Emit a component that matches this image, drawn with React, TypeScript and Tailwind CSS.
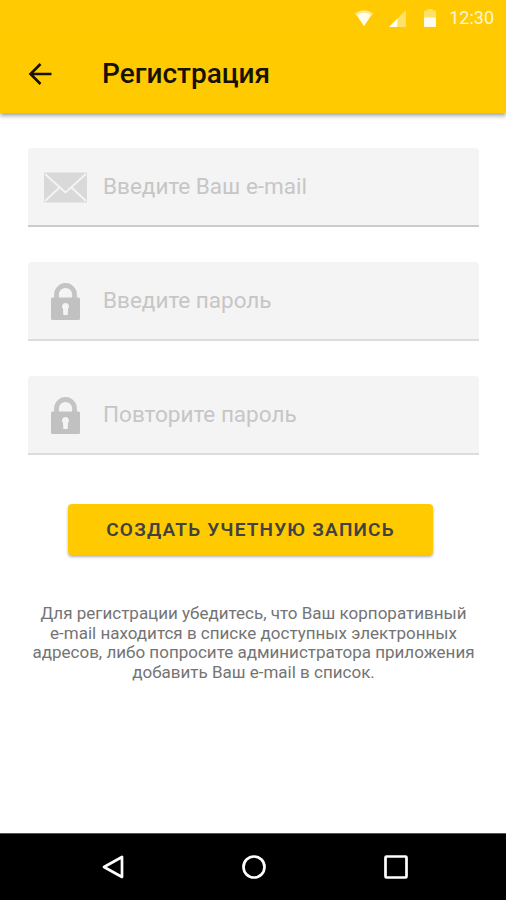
import type { ReactNode } from 'react';

interface FieldProps {
  icon: ReactNode;
  type: 'email' | 'password';
  placeholder: string;
  className?: string;
}

function MailIcon() {
  return (
    <svg width="43" height="31" viewBox="0 0 43 31" fill="none">
      <path d="M0 .5h43v30H0z" fill="#d9d9d9" />
      <path d="M1 2l20.500 18.500L42 2M1 29l14.500-13.500M42 29L27.500 15.500" stroke="#f4f4f4" strokeWidth="2" />
    </svg>
  );
}

function LockIcon() {
  return (
    <svg width="29" height="38" viewBox="0 0 29 38" fill="none">
      <path d="M5.500 17v-4.500a9 9 0 0 1 18 0V17" stroke="#c4c4c4" strokeWidth="4.800" />
      <rect y="15.500" width="29" height="22.500" rx="1.500" fill="#c1c1c1" />
      <path d="M14.500 21a3.500 3.500 0 0 0-2.500 6L12.300 33h4.400l.3-6a3.500 3.500 0 0 0-2.500-6z" fill="#f4f4f4" />
    </svg>
  );
}

function Field({ icon, type, placeholder, className = 'border-[#dcdcdc]' }: FieldProps) {
  return (
    <label className={`flex h-[79px] items-center rounded-t-[4px] border-b-2 bg-[#f4f4f4] ${className}`}>
      <span className="flex w-[75px] shrink-0 justify-center pt-px">{icon}</span>
      <input
        type={type}
        placeholder={placeholder}
        className="min-w-0 flex-1 bg-transparent pt-px text-[22.500px] text-[#333] outline-none placeholder:text-[#c6c6c6]"
      />
    </label>
  );
}

function StatusBar() {
  return (
    <div className="flex h-[33px] items-center justify-end bg-[#ffca02] pt-[3px] pr-3 text-[#fff6d5]">
      <svg width="18" height="16" viewBox="0 0 20 16" preserveAspectRatio="none" className="mr-[16px]">
        <path d="M0 3.500Q10-3 20 3.500L10 16z" fill="#ffe993" />
        <path d="M2.500 5Q10 .5 17.500 5L10 16z" fill="#fffbed" />
      </svg>
      <svg width="17" height="17" viewBox="0 0 17 17" className="mr-[18px]">
        <path d="M17 0v17H0z" fill="#ffe06b" />
        <path d="M8.500 8.500V17H0z" fill="#fffbed" />
      </svg>
      <svg width="12" height="18" viewBox="0 0 13 18" preserveAspectRatio="none" className="mr-[13px]">
        <path d="M3.500 0h6v1.500H12q1 0 1 1V9H0V2.500q0-1 1-1h2.500z" fill="#ffe06b" />
        <path d="M0 8.500h13V17q0 1-1 1H1q-1 0-1-1z" fill="#fffbed" />
      </svg>
      <span className="text-[18px] leading-none">12:30</span>
    </div>
  );
}

function NavigationBar() {
  return (
    <nav className="flex h-[67px] items-center justify-between border-t border-[#555] bg-black pr-[98px] pl-[102px]">
      <button aria-label="Назад">
        <svg width="22" height="24" viewBox="0 0 22 24" fill="none">
          <path d="M20 2v20L2 12z" stroke="#fff" strokeWidth="2.700" strokeLinejoin="round" />
        </svg>
      </button>
      <button aria-label="Домой">
        <svg width="24" height="24" viewBox="0 0 24 24" fill="none">
          <circle cx="12" cy="12" r="10.500" stroke="#fff" strokeWidth="2.700" />
        </svg>
      </button>
      <button aria-label="Недавние">
        <svg width="24" height="24" viewBox="0 0 24 24" fill="none">
          <rect x="1.500" y="1.500" width="21" height="21" rx="1" stroke="#fff" strokeWidth="2.700" />
        </svg>
      </button>
    </nav>
  );
}

export default function App() {
  return (
    <div className="flex h-[900px] w-[506px] flex-col overflow-hidden bg-white font-[Roboto,sans-serif]">
      <header className="bg-[#ffcb00] shadow-[0_3px_4px_rgba(60,70,80,0.45)]">
        <StatusBar />
        <div className="flex h-20 items-center pt-px pl-7">
          <button aria-label="Вернуться">
            <svg width="24" height="24" viewBox="0 0 24 24" fill="none" stroke="#161100" strokeWidth="2.600">
              <path d="M23.500 12H2.500M12.500 2L2.500 12l10 10" />
            </svg>
          </button>
          <h1 className="ml-[50px] text-[28px] leading-none font-medium text-[#161100]">Регистрация</h1>
        </div>
      </header>

      <main className="flex flex-1 flex-col items-center pt-[35px] pr-[27px] pl-[28px]">
        <form className="flex w-full flex-col gap-[35px]">
          <Field icon={<MailIcon />} type="email" placeholder="Введите Ваш e-mail" className="border-[#cbcbcb]" />
          <Field icon={<LockIcon />} type="password" placeholder="Введите пароль" />
          <Field icon={<LockIcon />} type="password" placeholder="Повторите пароль" />
          <button
            type="button"
            className="mt-[14px] ml-10 h-[51px] w-[365px] rounded-[4px] bg-[#ffcb00] pt-px text-[19px] font-semibold tracking-[1.180px] text-[#424242] shadow-[0_2px_3px_rgba(0,0,0,0.3)]"
          >
            СОЗДАТЬ УЧЕТНУЮ ЗАПИСЬ
          </button>
        </form>
        <p className="mt-[49px] text-center text-[17px] leading-[19.700px] whitespace-nowrap text-[#747474]">
          Для регистрации убедитесь, что Ваш корпоративный
          <br />
          e-mail находится в списке доступных электронных
          <br />
          адресов, либо попросите администратора приложения
          <br />
          добавить Ваш e-mail в список.
        </p>
      </main>

      <NavigationBar />
    </div>
  );
}
